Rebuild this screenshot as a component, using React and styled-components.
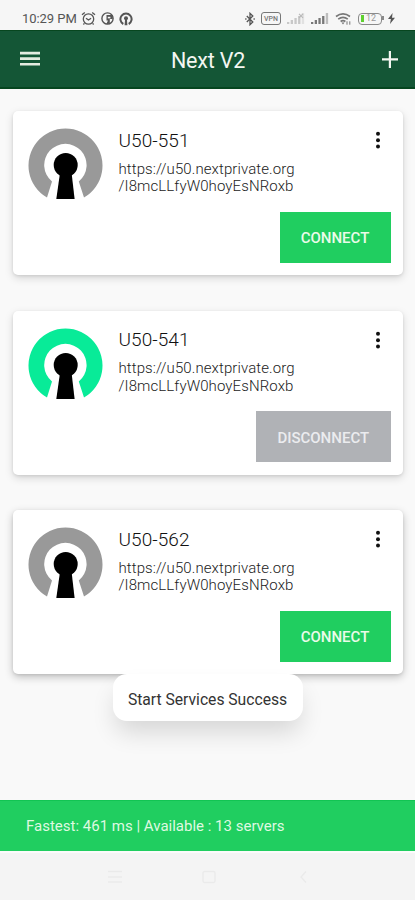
import React from 'react';
import styled, { createGlobalStyle } from 'styled-components';

const GlobalStyle = createGlobalStyle`
  * {
    box-sizing: border-box;
  }

  body {
    margin: 0;
    background-color: #f9f9f9;
    font-family: Roboto, "Liberation Sans", sans-serif;
  }

  svg {
    display: block;
    flex-shrink: 0;
  }
`;

const Screen = styled.div`
  width: 415px;
  height: 900px;
  display: flex;
  flex-direction: column;
  overflow: hidden;
  background-color: #f9f9f9;
`;

// Status bar
const StatusBar = styled.div`
  height: 30px;
  flex-shrink: 0;
  display: flex;
  justify-content: space-between;
  padding: 8px 20px 0 22px;
  background-color: #f6f6f6;
  color: #555;
`;

const StatusGroup = styled.div`
  display: flex;
  align-items: center;
  height: 21px;
  gap: ${(props) => props.$gap}px;
`;

const Clock = styled.span`
  width: 54px;
  font-size: 13px;
  letter-spacing: -0.05px;
  white-space: nowrap;
`;

// Header
const Header = styled.header`
  height: 59px;
  flex-shrink: 0;
  display: grid;
  grid-template-columns: 60px 1fr 60px;
  align-items: center;
  background-color: #145636;
  border-top: 1px solid #07461f;
  border-bottom: 2px solid #064620;
  color: #f4f7f2;
`;

const Title = styled.h1`
  margin: 0;
  padding: 3px 0 0 1px;
  font-size: 21.5px;
  font-weight: 400;
  letter-spacing: -0.2px;
  text-align: center;
`;

const IconButton = styled.button`
  display: flex;
  justify-content: ${(props) => props.$align || 'center'};
  padding: 0;
  border: 0;
  background: none;
  color: inherit;
`;

const MenuButton = styled(IconButton)`
  padding: 0 19px;
`;

const AddButton = styled(IconButton)`
  padding: 1px 17px 0;
`;

// Server list
const ServerList = styled.main`
  flex: 1;
  display: flex;
  flex-direction: column;
  gap: 35.5px;
  padding: 22px 12px 0 12.5px;
`;

const Card = styled.section`
  height: 164px;
  flex-shrink: 0;
  display: flex;
  flex-direction: column;
  justify-content: space-between;
  padding: 16px 12.5px 12.5px 15.5px;
  border-radius: 5px;
  background-color: #fff;
  box-shadow: 0 3px 9px rgba(0, 0, 0, ${(props) => (props.$raised ? 0.24 : 0.15)}),
    0 1px 3px rgba(0, 0, 0, 0.09);
`;

const CardTop = styled.div`
  display: flex;
  align-items: flex-start;
`;

const Details = styled.div`
  flex: 1;
  padding: 2.5px 0 0 14.5px;
`;

const ServerName = styled.h2`
  margin: 0;
  font-size: 19px;
  font-weight: 300;
  line-height: 22px;
  letter-spacing: 0.05px;
  color: #111;
`;

const ServerUrl = styled.p`
  margin: 9px 0 0;
  font-size: 15px;
  font-weight: 300;
  line-height: 17.5px;
  letter-spacing: 0.1px;
  white-space: nowrap;
  color: #222;
`;

const MoreButton = styled(IconButton)`
  padding: 4px 10px 0;
`;

const ConnectButton = styled.button`
  align-self: flex-end;
  width: ${(props) => (props.$connected ? 134.5 : 111)}px;
  height: 51px;
  padding: 2px 0 0;
  border: 0;
  background-color: ${(props) => (props.$connected ? '#b0b2b6' : '#20ce60')};
  color: ${(props) => (props.$connected ? '#ebecef' : '#eafbe9')};
  font-family: inherit;
  font-size: 15px;
  font-weight: 500;
`;

// Toast laid over the list
const Toast = styled.div`
  position: absolute;
  top: 674px;
  left: 113px;
  width: 190px;
  height: 47px;
  display: flex;
  align-items: center;
  justify-content: center;
  padding: 3px 1px 0 0;
  border-radius: 14px;
  background-color: #fff;
  box-shadow: 0 14px 24px -3px rgba(0, 0, 0, 0.14);
  color: #333;
  font-size: 15.7px;
  letter-spacing: -0.02px;
  white-space: nowrap;
`;

const Footer = styled.footer`
  height: 50.5px;
  flex-shrink: 0;
  display: flex;
  align-items: center;
  padding: 1px 26px 0;
  border-top: 1px solid #12c453;
  background-color: #20ce60;
  color: #dff9e0;
  font-size: 15px;
  white-space: pre;
`;

const NavBar = styled.nav`
  height: 49.5px;
  flex-shrink: 0;
  display: flex;
  gap: 79px;
  padding: 17.5px 0 0 108px;
  border-top: 2px solid #fbfbfb;
  background-color: #f4f4f4;
  color: #eaeaea;
`;

function AlarmIcon() {
  return (
    <svg width="15" height="15" viewBox="0 0 15 15" fill="none" stroke="currentColor" strokeWidth="1.3">
      <circle cx="7.5" cy="8" r="5.2" />
      <path d="M1 3.8 3.8 1.4M14 3.8 11.2 1.4M5 7.2l2.5 1.8 2.6-1.8M3.4 12.3 2.4 13.5M11.6 12.3l1 1.2" />
    </svg>
  );
}

function AppBadgeIcon() {
  return (
    <svg width="13" height="13" viewBox="0 0 13 13">
      <circle cx="6.5" cy="6.5" r="5.6" fill="none" stroke="currentColor" strokeWidth="1.4" />
      <path d="M5.5 3h6.2v4H8.8v4.6L5.2 12.2 7 8.6H5.5z" fill="currentColor" />
      <path d="M6.8 4.8h2.6v1.6H6.8z" fill="#f6f6f6" />
    </svg>
  );
}

function VpnBadgeIcon() {
  return (
    <svg width="14" height="14" viewBox="0 0 14 14">
      <path d="M4.3 12A5.6 5.6 0 1 1 9.7 12" fill="none" stroke="currentColor" strokeWidth="2" />
      <circle cx="7" cy="6.3" r="2" fill="currentColor" />
      <path d="M6.1 7h1.8l.5 6.2H5.6z" fill="currentColor" />
    </svg>
  );
}

function BluetoothIcon() {
  return (
    <svg width="10" height="14" viewBox="0 0 10 14" fill="none" stroke="currentColor" strokeWidth="1.3">
      <path d="M1.8 4 7.8 10 5 12.7V1.3L7.8 4 1.8 10" />
      <path d="M.2 7h1.3M8.5 7h1.3" />
    </svg>
  );
}

const VpnBox = styled.span`
  width: 20px;
  height: 13px;
  display: flex;
  align-items: center;
  justify-content: center;
  border: 1.5px solid #777;
  border-radius: 3px;
  color: #777;
  font-size: 7px;
  font-weight: 500;
  line-height: 8px;
`;

function SignalIcon({ muted }) {
  const heights = [2, 4, 6, 8, 11];
  return (
    <svg width="18" height="13" viewBox="0 0 18 13" fill={muted ? '#c8c8c8' : '#777'}>
      {heights.map((h, i) => (
        <rect
          key={h}
          x={i * 3.7}
          y={12 - h}
          width="2.3"
          height={h}
          opacity={i === 4 ? 0.45 : 1}
        />
      ))}
      {muted && <path d="m12 1.8 4 4M16 1.8l-4 4" stroke="#b8b8b8" strokeWidth="1.1" />}
    </svg>
  );
}

function WifiIcon() {
  return (
    <svg width="17" height="14" viewBox="0 0 17 14" fill="none" stroke="#777" strokeWidth="1.6">
      <path d="M1 4.5Q8-.8 15 4.5M3.2 7.2Q8 3.6 12.8 7.2M5.6 9.5Q8 7.8 10.4 9.5" />
      <path d="m6.5 10.5 1.5 2 1.5-2z" fill="#777" stroke="none" />
      <path d="M12 9.3v3.4M14.8 9.3v3.4" strokeWidth="1" />
    </svg>
  );
}

const Battery = styled.span`
  position: relative;
  width: 24px;
  height: 12px;
  display: flex;
  align-items: center;
  gap: 2px;
  padding: 1px 1px 1px 2px;
  border: 1.5px solid #8a8a8a;
  border-radius: 4px;
  color: #999;
  font-size: 9px;
  line-height: 9px;

  &::before {
    content: '';
    width: 3px;
    height: 7px;
    background-color: #5fd02f;
  }

  &::after {
    content: '';
    position: absolute;
    right: -3px;
    top: 2.5px;
    width: 2px;
    height: 4px;
    background-color: #8a8a8a;
  }
`;

function BoltIcon() {
  return (
    <svg width="7" height="11" viewBox="0 0 7 11" fill="currentColor">
      <path d="M4.6 0 0 6h2.9L2 11l5-6.3H4z" />
    </svg>
  );
}

function MenuIcon() {
  return (
    <svg width="22" height="17" viewBox="0 0 22 17" fill="#e4ece0">
      <path d="M1 .7h20v2.7H1zM1 6.3h20V9H1zM1 11.9h20v2.7H1z" />
    </svg>
  );
}

function PlusIcon() {
  return (
    <svg width="16" height="17" viewBox="0 0 16 17" fill="currentColor">
      <path d="M6.8 0h2.2v7.3H16v2.2H9V17H6.8V9.5H0V7.3h6.8z" />
    </svg>
  );
}

function DotsIcon() {
  return (
    <svg width="6" height="18" viewBox="0 0 6 18" fill="#111">
      <circle cx="3" cy="2.8" r="2" />
      <circle cx="3" cy="9.2" r="2" />
      <circle cx="3" cy="15.6" r="2" />
    </svg>
  );
}

function KeyholeLogo({ active }) {
  return (
    <svg width="76" height="74" viewBox="0 0 76 74">
      <path
        d="M19 70.5A37 37 0 1 1 56 70.5L50.8 54.5A21.2 21.2 0 1 0 24 54.5Z"
        fill={active ? '#08eb98' : '#999'}
      />
      <circle cx="37.7" cy="38" r="12" fill="#000" />
      <path d="M32 46h11.6l3 26H28.3z" fill="#000" />
    </svg>
  );
}

const servers = [
  { name: 'U50-551', connected: false },
  { name: 'U50-541', connected: true },
  { name: 'U50-562', connected: false, raised: true },
];

function ServerCard({ name, connected, raised }) {
  return (
    <Card $raised={raised}>
      <CardTop>
        <KeyholeLogo active={connected} />
        <Details>
          <ServerName>{name}</ServerName>
          <ServerUrl>
            https://u50.nextprivate.org
            <br />
            /I8mcLLfyW0hoyEsNRoxb
          </ServerUrl>
        </Details>
        <MoreButton aria-label="More">
          <DotsIcon />
        </MoreButton>
      </CardTop>
      <ConnectButton $connected={connected}>
        {connected ? 'DISCONNECT' : 'CONNECT'}
      </ConnectButton>
    </Card>
  );
}

function App() {
  return (
    <>
      <GlobalStyle />
      <Screen>
        <StatusBar>
          <StatusGroup $gap={5}>
            <Clock>10:29 PM</Clock>
            <AlarmIcon />
            <AppBadgeIcon />
            <VpnBadgeIcon />
          </StatusGroup>
          <StatusGroup $gap={6}>
            <BluetoothIcon />
            <VpnBox>VPN</VpnBox>
            <SignalIcon muted />
            <SignalIcon />
            <WifiIcon />
            <Battery>12</Battery>
            <BoltIcon />
          </StatusGroup>
        </StatusBar>
        <Header>
          <MenuButton aria-label="Menu" $align="flex-start">
            <MenuIcon />
          </MenuButton>
          <Title>Next V2</Title>
          <AddButton aria-label="Add" $align="flex-end">
            <PlusIcon />
          </AddButton>
        </Header>
        <ServerList>
          {servers.map((server) => (
            <ServerCard key={server.name} {...server} />
          ))}
        </ServerList>
        <Footer>Fastest: 461 ms | Available : 13 servers</Footer>
        <NavBar>
          <svg width="15" height="14" viewBox="0 0 15 14" stroke="currentColor" strokeWidth="1.3">
            <path d="M0 1.5h14M0 7h14M0 12h14" />
          </svg>
          <svg width="15" height="14" viewBox="0 0 15 14" fill="none" stroke="currentColor" strokeWidth="1.3">
            <rect x="1" y="1.5" width="12" height="11" rx="1.5" />
          </svg>
          <svg width="15" height="14" viewBox="0 0 15 14" fill="none" stroke="currentColor" strokeWidth="1.3">
            <path d="M10 1.5 5 7l5 5.5" />
          </svg>
        </NavBar>
        <Toast>Start Services Success</Toast>
      </Screen>
    </>
  );
}

export default App;
